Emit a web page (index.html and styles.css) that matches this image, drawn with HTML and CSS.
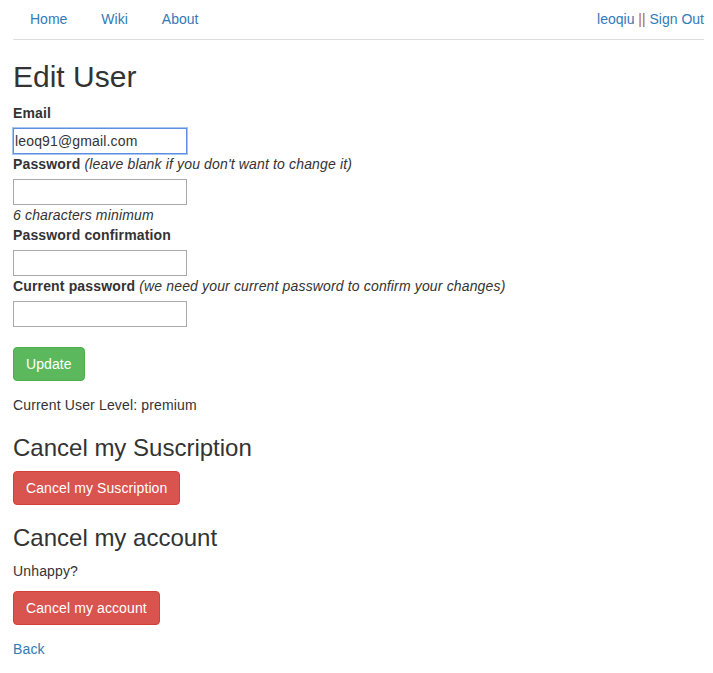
FILE: index.html
```html
<!DOCTYPE html>
<html>
<head>
<meta charset="utf-8">
<title>Edit User</title>
<link rel="stylesheet" href="styles.css">
</head>
<body>
<div class="page">
  <div class="topnav">
    <ul class="tabs">
      <li><a href="#">Home</a></li>
      <li><a href="#">Wiki</a></li>
      <li><a href="#">About</a></li>
    </ul>
    <div class="userbox"><a href="#">leoqiu</a> <span class="sep">||</span> <a href="#">Sign Out</a></div>
  </div>

  <h2 class="title">Edit User</h2>

  <form class="form">
    <div class="field">
      <div class="labelrow"><label class="lbl">Email</label></div>
      <input class="inp focused" type="email" value="leoq91@gmail.com">
    </div>
    <div class="field">
      <div class="labelrow"><label class="lbl">Password</label> <i class="hint">(leave blank if you don't want to change it)</i></div>
      <input class="inp" type="password">
      <i class="note">6 characters minimum</i>
    </div>
    <div class="field">
      <div class="labelrow"><label class="lbl">Password confirmation</label></div>
      <input class="inp" type="password">
    </div>
    <div class="field">
      <div class="labelrow"><label class="lbl">Current password</label> <i class="hint">(we need your current password to confirm your changes)</i></div>
      <input class="inp" type="password">
    </div>
    <div class="actions">
      <button class="btn btn-green" type="button">Update</button>
    </div>
  </form>

  <p class="level">Current User Level: premium</p>

  <h3 class="sub">Cancel my Suscription</h3>
  <button class="btn btn-red" type="button">Cancel my Suscription</button>

  <h3 class="sub">Cancel my account</h3>
  <p class="plain">Unhappy?</p>
  <button class="btn btn-red" type="button">Cancel my account</button>

  <p class="back"><a href="#">Back</a></p>
</div>
</body>
</html>
```

FILE: styles.css
```css
html, body {
  margin: 0;
  padding: 0;
  background: #ffffff;
}

body {
  font-family: "Liberation Sans", Arial, sans-serif;
  font-size: 14px;
  line-height: 20px;
  color: #333333;
  letter-spacing: 0.15px;
}

a {
  color: #337ab7;
  text-decoration: none;
}

.page {
  padding: 0 9px 0 13px;
}

.topnav {
  display: flex;
  justify-content: space-between;
  align-items: flex-start;
  border-bottom: 1px solid #dddddd;
  letter-spacing: 0;
}

.tabs {
  display: flex;
  list-style: none;
  margin: 0;
  padding: 0 0 0 2px;
}

.tabs li a {
  display: block;
  padding: 9px 15px 10px;
  margin-right: 4px;
  line-height: 20px;
}

.userbox {
  padding: 9px 0 10px;
  line-height: 20px;
}

.sep {
  color: #b8651f;
}

.title {
  font-size: 30px;
  font-weight: 500;
  line-height: 33px;
  margin: 20px 0 10px;
  letter-spacing: 0;
}

.form {
  margin: 0;
}

.field {
  display: block;
}

.labelrow {
  height: 20px;
  line-height: 20px;
  margin-bottom: 5px;
  white-space: nowrap;
}

.lbl {
  font-weight: bold;
}

.hint {
  font-style: italic;
}

.inp {
  display: block;
  box-sizing: border-box;
  width: 174px;
  height: 26px;
  margin: 0;
  padding: 1px 1px;
  border: 1px solid #a9a9a9;
  font-family: "Liberation Sans", Arial, sans-serif;
  font-size: 14px;
  line-height: 20px;
  letter-spacing: 0.15px;
  color: #333333;
  background: #ffffff;
  outline: none;
}

.inp.focused {
  border-color: #5e8ee0;
  box-shadow: 0 0 0 1px #a8c4f0;
}

.note {
  display: block;
  font-style: italic;
  line-height: 20px;
}

.actions {
  margin-top: 20px;
}

.btn {
  display: inline-block;
  box-sizing: border-box;
  height: 34px;
  padding: 6px 12px;
  font-family: "Liberation Sans", Arial, sans-serif;
  font-size: 14px;
  line-height: 20px;
  letter-spacing: 0.1px;
  color: #ffffff;
  border: 1px solid transparent;
  border-radius: 4px;
  cursor: pointer;
  margin: 0;
}

.btn-green {
  background: #5cb85c;
  border-color: #4cae4c;
}

.btn-red {
  background: #d9534f;
  border-color: #d43f3a;
}

.level {
  margin: 14px 0 10px;
}

.sub {
  font-size: 24px;
  font-weight: 500;
  line-height: 26px;
  margin: 20px 0 10px;
  letter-spacing: 0;
}

.plain {
  margin: 0 0 10px;
}

.back {
  margin: 14px 0 10px;
}
```
